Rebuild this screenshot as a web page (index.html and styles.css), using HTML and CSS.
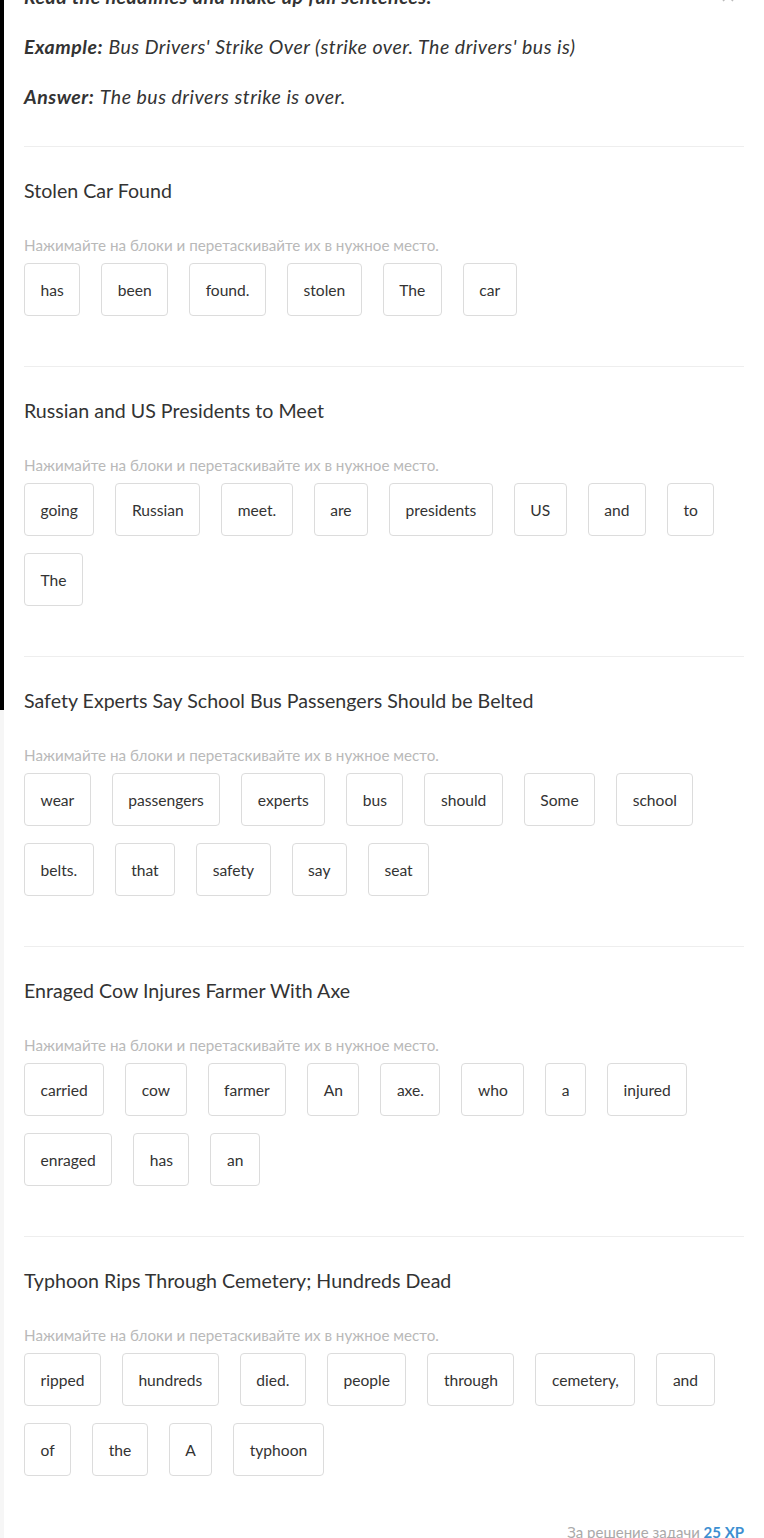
FILE: index.html
```html
<!DOCTYPE html>
<html lang="ru">
<head>
<meta charset="utf-8">
<link rel="stylesheet" href="styles.css">
</head>
<body>
<div class="page">
  <div class="edge"><div class="edge-dark"></div><div class="edge-light"></div></div>
  <main class="content">
    <div class="intro">
      <svg class="chev" width="12" height="8" viewBox="0 0 12 8"><path d="M1 7 L6 2 L11 7" fill="none" stroke="#bbb" stroke-width="1.5"/></svg>
      <p class="task"><b><i>Read the headlines and make up full sentences.</i></b></p>
      <p><b><i>Example:</i></b> <i>Bus Drivers' Strike Over (strike over. The drivers' bus is)</i></p>
      <p><b><i>Answer:</i></b> <i>The bus drivers strike is over.</i></p>
    </div>

    <section class="q">
      <h2>Stolen Car Found</h2>
      <div class="hint">Нажимайте на блоки и перетаскивайте их в нужное место.</div>
      <div class="tiles">
        <span class="tile">has</span><span class="tile">been</span><span class="tile">found.</span><span class="tile">stolen</span><span class="tile">The</span><span class="tile">car</span>
      </div>
    </section>

    <section class="q">
      <h2>Russian and US Presidents to Meet</h2>
      <div class="hint">Нажимайте на блоки и перетаскивайте их в нужное место.</div>
      <div class="tiles">
        <span class="tile">going</span><span class="tile">Russian</span><span class="tile">meet.</span><span class="tile">are</span><span class="tile">presidents</span><span class="tile">US</span><span class="tile">and</span><span class="tile">to</span><span class="tile">The</span>
      </div>
    </section>

    <section class="q">
      <h2>Safety Experts Say School Bus Passengers Should be Belted</h2>
      <div class="hint">Нажимайте на блоки и перетаскивайте их в нужное место.</div>
      <div class="tiles">
        <span class="tile">wear</span><span class="tile">passengers</span><span class="tile">experts</span><span class="tile">bus</span><span class="tile">should</span><span class="tile">Some</span><span class="tile">school</span><span class="tile">belts.</span><span class="tile">that</span><span class="tile">safety</span><span class="tile">say</span><span class="tile">seat</span>
      </div>
    </section>

    <section class="q">
      <h2>Enraged Cow Injures Farmer With Axe</h2>
      <div class="hint">Нажимайте на блоки и перетаскивайте их в нужное место.</div>
      <div class="tiles">
        <span class="tile">carried</span><span class="tile">cow</span><span class="tile">farmer</span><span class="tile">An</span><span class="tile">axe.</span><span class="tile">who</span><span class="tile">a</span><span class="tile">injured</span><span class="tile">enraged</span><span class="tile">has</span><span class="tile">an</span>
      </div>
    </section>

    <section class="q last">
      <h2>Typhoon Rips Through Cemetery; Hundreds Dead</h2>
      <div class="hint">Нажимайте на блоки и перетаскивайте их в нужное место.</div>
      <div class="tiles">
        <span class="tile">ripped</span><span class="tile">hundreds</span><span class="tile">died.</span><span class="tile">people</span><span class="tile">through</span><span class="tile">cemetery,</span><span class="tile">and</span><span class="tile">of</span><span class="tile">the</span><span class="tile">A</span><span class="tile">typhoon</span>
      </div>
    </section>

    <div class="reward">За решение задачи <span class="xp">25 XP</span></div>
  </main>
</div>
</body>
</html>
```
FILE: styles.css
```css
html, body {
  margin: 0;
  padding: 0;
  background: #fff;
  overflow: hidden;
}
body {
  font-family: Lato, "Noto Sans", sans-serif;
  color: #333;
}
.page {
  display: flex;
  min-height: 1538px;
}
.edge {
  width: 4px;
  display: flex;
  flex-direction: column;
  flex-shrink: 0;
}
.edge-dark {
  height: 710px;
  background: #000;
}
.edge-light {
  flex: 1;
  background: #f6f6f6;
}
.content {
  flex: 1;
  padding: 0 20px 0 20px;
}
.intro {
  position: relative;
  margin-top: -16px;
  padding-bottom: 36px;
}
.chev {
  position: absolute;
  right: 10px;
  top: 10px;
}
.intro p {
  margin: 0 0 24px;
  font-size: 19.5px;
  letter-spacing: 0.5px;
  line-height: 26px;
  color: #333;
}
.intro p:last-child { margin-bottom: 0; }
.q {
  border-top: 1px solid #eeeeee;
  padding: 30px 0 50px;
}
.q.last { padding-bottom: 0; }
.q h2 {
  margin: 0 0 30px;
  font-size: 19.6px;
  line-height: 28px;
  font-weight: 400;
  color: #333;
}
.hint {
  font-size: 15.2px;
  line-height: 20px;
  color: #b9b9b9;
  margin-bottom: 8px;
}
.tiles {
  display: flex;
  flex-wrap: wrap;
  column-gap: 21px;
  row-gap: 17px;
}
.tile {
  box-sizing: border-box;
  height: 53px;
  display: flex;
  align-items: center;
  padding: 0 15.5px;
  border: 1px solid #dcdcdc;
  border-radius: 4px;
  font-size: 15.6px;
  color: #333;
}
.reward {
  text-align: right;
  font-size: 15px;
  line-height: 18px;
  color: #aaa;
  padding-top: 47px;
}
.xp {
  color: #3d8fd1;
  font-weight: 700;
}
```
